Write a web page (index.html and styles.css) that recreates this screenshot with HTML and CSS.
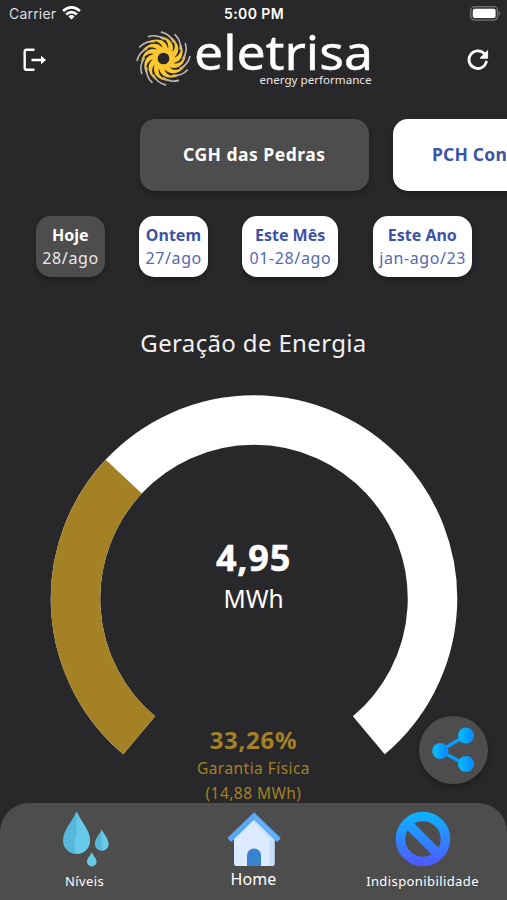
FILE: index.html
```html
<!DOCTYPE html>
<html lang="pt-BR">
<head>
<meta charset="utf-8">
<title>Eletrisa</title>
<link rel="stylesheet" href="styles.css">
</head>
<body>
<div class="app">
  <div class="status">
    <span class="carrier">Carrier</span>
    <svg class="wifi" width="19" height="14" viewBox="0 0 19 14" fill="none" stroke="#fff" stroke-width="2.7"><path d="M1.1 5.1Q9.5-2.3 17.9 5.1M4.1 8.4Q9.5 3.7 14.9 8.4"/><path d="M6.4 10.4Q9.5 7.8 12.6 10.4L9.5 13.6Z" fill="#fff" stroke="none"/></svg>
    <span class="clock">5:00 PM</span>
    <svg class="battery" width="31" height="15" viewBox="0 0 31 15"><rect x=".7" y=".7" width="27" height="13.4" rx="4" fill="#343436" stroke="#737375" stroke-width="1.3"/><rect x="2.8" y="2.7" width="22.8" height="9.4" rx="2" fill="#fff"/><path d="M29 5Q31.3 7.4 29 9.8Z" fill="#737375"/></svg>
  </div>
  <header class="header">
    <svg class="logout" width="24" height="24" viewBox="0 0 24 24" fill="none" stroke="#fff" stroke-width="2.4" stroke-linejoin="round"><path d="M12.5 1.8H4.5Q2.7 1.8 2.7 3.6V20Q2.7 21.8 4.5 21.8H12.5M9.5 12H20"/><path d="M19 7.8L24 12L19 16.2Z" fill="#fff" stroke="none"/></svg>
    <svg class="logo" width="240" height="60" viewBox="134 29 240 60" role="img">
      <defs>
        <g id="blade"><path d="M-5-22.5C4.500-22 12.500-15 8.500-5.500L4-8C7-15 2-20-5-22.5Z" fill="#fdc72f"/><path d="M-2-26.4Q6.5-24.4 9.8-16.5" fill="none" stroke="#b9b9bc" stroke-width="1.6" stroke-linecap="round"/></g>
        <g id="quarter"><use href="#blade"/><use href="#blade" transform="rotate(30)"/><use href="#blade" transform="rotate(60)"/></g>
      </defs>
      <g transform="translate(163.5 58.5)">
        <use href="#quarter"/><use href="#quarter" transform="rotate(90)"/><use href="#quarter" transform="rotate(180)"/><use href="#quarter" transform="rotate(270)"/>
        <circle r="8.6" fill="#28282a" stroke="#fdc72f" stroke-width="5.5"/>
      </g>
      <text class="brand" x="194" y="69.5" textLength="179" lengthAdjust="spacingAndGlyphs">eletrisa</text>
      <text class="tagline" x="259.5" y="84" textLength="112" lengthAdjust="spacingAndGlyphs">energy performance</text>
    </svg>
    <svg class="refresh" width="22" height="22" viewBox="0 0 22 22"><path d="M17.2 4.6A8.8 8.8 0 1 0 19.3 13" fill="none" stroke="#fff" stroke-width="2.8" stroke-linecap="round"/><path d="M20.6 1.6V9.2H13.1Z" fill="#fff" stroke="#fff" stroke-width=".9" stroke-linejoin="round"/></svg>
  </header>
  <div class="plants">
    <button class="card plant active">CGH das Pedras</button>
    <button class="card plant next">PCH Confluência</button>
  </div>
  <div class="periods">
    <button class="card period active p1"><b>Hoje</b><span>28/ago</span></button>
    <button class="card period p2"><b>Ontem</b><span>27/ago</span></button>
    <button class="card period p3"><b>Este Mês</b><span>01-28/ago</span></button>
    <button class="card period p4"><b>Este Ano</b><span>jan-ago/23</span></button>
  </div>
  <h1 class="title">Geração de Energia</h1>
  <main class="gauge">
    <svg class="dial" width="408" height="362" viewBox="-204 -204 408 362" fill="none" stroke-width="49.5">
      <path d="M-114.8 136.3A178.5 178.5 0 1 1 114.8 136.3" stroke="#fff" pathLength="100"/>
      <path d="M-114.8 136.3A178.5 178.5 0 1 1 114.8 136.3" stroke="#a38124" pathLength="100" stroke-dasharray="33.26 100"/>
    </svg>
    <div class="reading">
      <strong class="value">4,95</strong>
      <span class="unit">MWh</span>
      <strong class="percent">33,26%</strong>
      <span class="guarantee">Garantia Física</span>
      <span class="guarantee">(14,88 MWh)</span>
    </div>
  </main>
  <nav class="nav">
    <a class="tab"><svg width="48" height="56" viewBox="0 0 48 56"><path d="M15.5.5C20 11 29 19 29 29.5A13.5 13.5 0 0 1 2 29.5C2 19 11 11 15.5.5Z" fill="#57b8db"/><path d="M15.5.5C20 11 29 19 29 29.5A13.5 13.5 0 0 1 15.5 43Q11 36 15.5 22Z" fill="#68cae9"/><path d="M40.7 18.5C43 24 47.5 27.5 47.5 33A6.8 6.8 0 0 1 33.9 33C33.9 27.5 38.5 24 40.7 18.5Z" fill="#57b8db"/><path d="M40.7 18.5C43 24 47.5 27.5 47.5 33A6.8 6.8 0 0 1 40.7 39.8Z" fill="#68cae9"/><path d="M30.8 41C32.3 45 35.6 47.3 35.6 50.7A4.8 4.8 0 0 1 26 50.7C26 47.3 29.3 45 30.8 41Z" fill="#68cae9"/></svg><span class="niveis">Níveis</span></a>
    <a class="tab"><svg width="56" height="56" viewBox="0 0 56 56"><path d="M8 24L28 6L48.5 24V52.5Q48.5 55 46 55H10.5Q8 55 8 52.5Z" fill="#dcebff"/><path d="M28 6L48.5 24V52.5Q48.5 55 46 55H41Q43.5 55 43.5 52.5V28L28 12Z" fill="#c9dff9"/><path d="M3.2 29L28 5L52.9 29" fill="none" stroke="#5aa8f3" stroke-width="5.4"/><path d="M28 5L52.9 29" fill="none" stroke="#66b6ff" stroke-width="2"/><path d="M21 55V44.5A7 7 0 0 1 35 44.5V55Z" fill="#3b82ce"/></svg><span class="home">Home</span></a>
    <a class="tab"><svg width="56" height="56" viewBox="0 0 56 56"><defs><linearGradient id="stop" gradientUnits="userSpaceOnUse" x1="0" y1="0" x2="0" y2="56"><stop stop-color="#08b7ff"/><stop offset="1" stop-color="#5355ff"/></linearGradient></defs><g fill="none" stroke="url(#stop)"><circle cx="28" cy="28" r="22.5" stroke-width="9.6"/><path d="M12.5 12.5L43.5 43.5" stroke-width="9.6"/></g></svg><span class="indisp">Indisponibilidade</span></a>
  </nav>
  <button class="share"><svg width="44" height="48" viewBox="0 0 44 48"><defs><linearGradient id="sg" x1="0" y1="0" x2="1" y2="0"><stop offset=".2" stop-color="#08b5f7"/><stop offset=".8" stop-color="#0a90ff"/></linearGradient></defs><path d="M35 9.5L9 25L35 38.5" fill="none" stroke="#089cff" stroke-width="3.4"/><g fill="url(#sg)"><circle cx="9.3" cy="25" r="8.1"/><circle cx="35" cy="9.5" r="8"/><circle cx="35" cy="38" r="8"/></g></svg></button>
</div>
</body>
</html>
```
FILE: styles.css
```css
* { box-sizing: border-box; }
body { margin: 0; background: #28282a; }
button { border: 0; padding: 0; font: inherit; color: inherit; }
.app {
  position: relative;
  display: flex;
  flex-direction: column;
  width: 507px;
  height: 900px;
  overflow: hidden;
  color: #fff;
  font-family: "Noto Sans", sans-serif;
}
.status {
  display: grid;
  grid-template-columns: 47px 166px 1fr 37px;
  align-items: center;
  height: 28px;
  flex: none;
  padding-left: 9px;
  font: 14px/28px Inter, sans-serif;
}
.carrier { color: #dededf; letter-spacing: .2px; }
.wifi { margin-left: 6px; margin-top: -2px; }
.clock { margin-left: 2px; font-weight: 600; letter-spacing: .4px; }
.battery { margin-top: -1px; }
.header { display: flex; height: 90px; flex: none; padding-top: 1px; }
.logout { margin: 19px 0 0 22px; }
.logo { margin-left: 88px; overflow: visible; }
.refresh { margin: 20px 0 0 93px; }
.brand { font: 48px "Noto Sans", sans-serif; fill: #fff; stroke: #fff; stroke-width: .4px; }
.tagline { font: 11.5px "Noto Sans", sans-serif; fill: #e6e6e6; }
.card {
  flex: none;
  background: #fff;
  color: #3c53a8;
  border-radius: 15px;
  box-shadow: 0 3px 5px rgba(0, 0, 0, .28);
}
.card.active { background: #4d4d4d; color: #fff; }
.plants { display: flex; flex: none; gap: 24.5px; padding: .5px 0 0 140px; height: 98px; }
.plant { width: 228.5px; height: 72.5px; padding-bottom: 1px; font-size: 17.5px; font-weight: 700; letter-spacing: .5px; white-space: nowrap; }
.plant.next { text-align: left; padding-left: 39px; letter-spacing: .2px; }
.periods { display: flex; flex: none; gap: 34.7px; padding-left: 36px; height: 61px; }
.period { display: flex; flex-direction: column; align-items: center; padding-top: 8px; font-size: 16px; line-height: 23px; white-space: nowrap; }
.period span { opacity: .88; letter-spacing: .6px; margin-right: -.6px; }
.p1, .p2 { width: 68.5px; }
.p3 { width: 95.5px; }
.p4 { width: 99.5px; }
.title { flex: none; margin: 49px 0 0; height: 34px; font-size: 24px; line-height: 34px; font-weight: 400; letter-spacing: .35px; text-align: center; color: #f2f2f2; }
.gauge { display: grid; height: 443px; flex: none; justify-items: center; }
.dial { grid-area: 1 / 1; margin-top: 35px; }
.reading { grid-area: 1 / 1; display: flex; flex-direction: column; align-items: center; padding-top: 176px; }
.value { font-size: 36px; line-height: 44px; letter-spacing: .8px; -webkit-text-stroke: .5px #fff; }
.unit { font-size: 24.5px; line-height: 38px; }
.percent { margin-top: 106px; font-size: 24px; line-height: 32px; letter-spacing: .7px; color: #a38124; }
.guarantee { font-size: 15.5px; line-height: 24.5px; letter-spacing: .45px; color: #a38124; }
.nav {
  position: relative;
  display: grid;
  grid-template-columns: repeat(3, 1fr);
  flex: none;
  height: 97px;
  border-radius: 29px 29px 0 0;
  background: #4d4d4d;
}
.tab { display: flex; flex-direction: column; align-items: center; padding-top: 8px; font-size: 13px; line-height: 24px; letter-spacing: .4px; }
.niveis, .indisp { margin-top: 2px; }
.home { font-size: 16px; letter-spacing: .1px; }
.share {
  position: absolute;
  left: 419px;
  top: 715.5px;
  width: 68.5px;
  height: 68.5px;
  display: grid;
  place-items: center;
  border-radius: 50%;
  background: #4d4d4d;
  box-shadow: 0 3px 6px rgba(0, 0, 0, .3);
}
```
